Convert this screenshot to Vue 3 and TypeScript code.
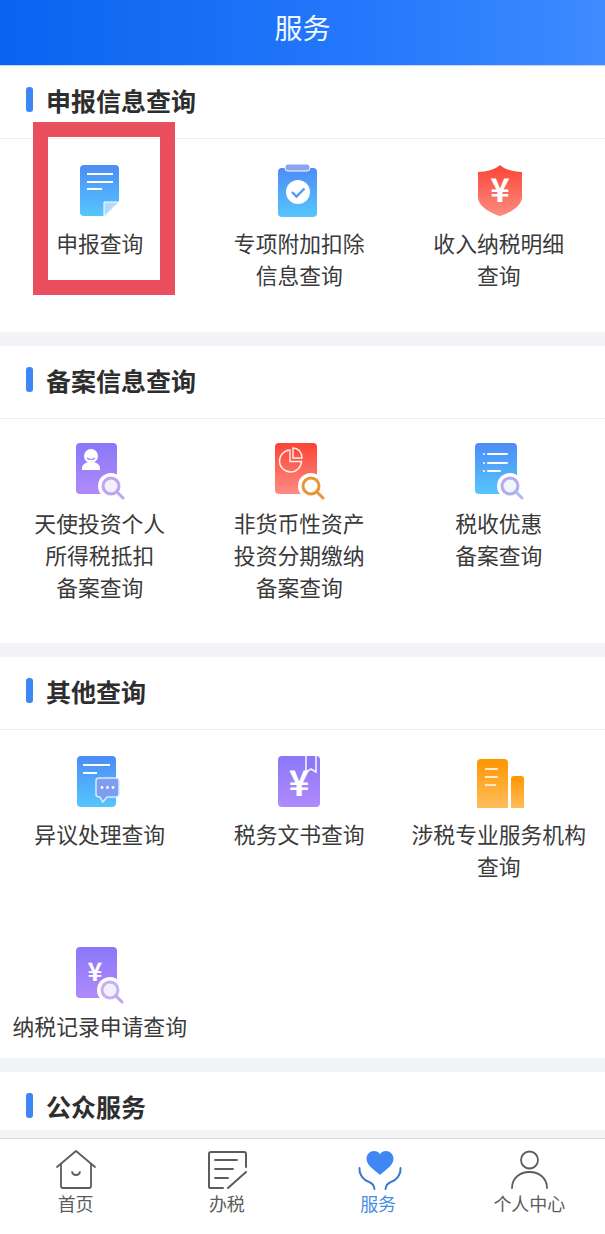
<script setup lang="ts">
interface Item {
  icon: string
  lines: string[]
}
interface Section {
  title: string
  pad: string
  items: Item[]
}

const sections: Section[] = [
  {
    title: '申报信息查询',
    pad: 'pad-a',
    items: [
      { icon: 'doc', lines: ['申报查询'] },
      { icon: 'clip', lines: ['专项附加扣除', '信息查询'] },
      { icon: 'shield', lines: ['收入纳税明细', '查询'] },
    ],
  },
  {
    title: '备案信息查询',
    pad: 'pad-b',
    items: [
      { icon: 'angel', lines: ['天使投资个人', '所得税抵扣', '备案查询'] },
      { icon: 'pie', lines: ['非货币性资产', '投资分期缴纳', '备案查询'] },
      { icon: 'list', lines: ['税收优惠', '备案查询'] },
    ],
  },
  {
    title: '其他查询',
    pad: 'pad-c',
    items: [
      { icon: 'bubble', lines: ['异议处理查询'] },
      { icon: 'book', lines: ['税务文书查询'] },
      { icon: 'org', lines: ['涉税专业服务机构', '查询'] },
      { icon: 'record', lines: ['纳税记录申请查询'] },
    ],
  },
]

const tabs = [
  { key: 'home', label: '首页' },
  { key: 'tax', label: '办税' },
  { key: 'service', label: '服务' },
  { key: 'me', label: '个人中心' },
]
</script>

<template>
  <div class="page">
    <header class="topbar">服务</header>
    <main class="content">
      <section v-for="s in sections" :key="s.title" class="card">
        <h2 class="head"><span class="mark"></span>{{ s.title }}</h2>
        <div class="grid" :class="s.pad">
          <div v-for="it in s.items" :key="it.icon" class="item">
            <svg class="icon" viewBox="0 0 60 56" width="60" height="56">
              <defs>
                <linearGradient id="gBlue" x1="0" y1="0" x2="0" y2="1">
                  <stop offset="0" stop-color="#4c8cf6" />
                  <stop offset="1" stop-color="#55c6fd" />
                </linearGradient>
                <linearGradient id="gRed" x1="0" y1="0" x2="0" y2="1">
                  <stop offset="0" stop-color="#fb4436" />
                  <stop offset="1" stop-color="#fd8c82" />
                </linearGradient>
                <linearGradient id="gPurple" x1="0" y1="0" x2="0" y2="1">
                  <stop offset="0" stop-color="#8a78f8" />
                  <stop offset="1" stop-color="#b08afb" />
                </linearGradient>
                <linearGradient id="gOrange" x1="0" y1="0" x2="0" y2="1">
                  <stop offset="0" stop-color="#ff9600" />
                  <stop offset="1" stop-color="#ffbd5c" />
                </linearGradient>
              </defs>

              <g v-if="it.icon === 'doc'">
                <path d="M14 2h31a4 4 0 0 1 4 4v33L35 53H14a4 4 0 0 1-4-4V6a4 4 0 0 1 4-4z" fill="url(#gBlue)" />
                <path d="M17 11h26M17 19h26M17 26h15" stroke="#fff" stroke-width="2" fill="none" />
                <path d="M34 39h15L34 53z" fill="#b5d8f8" stroke="#fff" stroke-width="1" />
              </g>

              <g v-else-if="it.icon === 'clip'">
                <rect x="8" y="5" width="39" height="49" rx="4" fill="url(#gBlue)" />
                <rect x="15" y="1" width="25" height="7" rx="3" fill="#8ba4ee" stroke="#fff" stroke-width="1" />
                <circle cx="28" cy="29" r="12" fill="#fff" />
                <path d="M22 29l4.500 4.500 8-8" stroke="#4f9bf6" stroke-width="2.400" fill="none" />
              </g>

              <g v-else-if="it.icon === 'shield'">
                <path d="M30 2c4 4 13 7 22 7v25c0 9-12 16-22 19C20 50 8 43 8 34V9c9 0 18-3 22-7z" fill="url(#gRed)" />
                <text x="30" y="39" class="yen" font-size="33" text-anchor="middle">¥</text>
              </g>

              <g v-else-if="it.icon === 'angel'">
                <rect x="6" y="0" width="41" height="51" rx="4" fill="url(#gPurple)" />
                <circle cx="21" cy="13" r="7" fill="#fff" />
                <path d="M17 15c2 2 6 2 8 0" stroke="#9a80f8" stroke-width="1.200" fill="none" />
                <path d="M12 27v-2c0-3 3-5 6-6h6c3 1 6 3 6 6v2z" fill="#fff" />
                <circle cx="41" cy="43" r="13" fill="#fff" />
                <circle cx="41" cy="43" r="8" fill="#f3effe" stroke="#bba6ef" stroke-width="3" />
                <path d="M47.500 49.500l5.500 5.500" stroke="#bba6ef" stroke-width="3" stroke-linecap="round" />
              </g>

              <g v-else-if="it.icon === 'pie'">
                <rect x="5" y="0" width="42" height="51" rx="4" fill="url(#gRed)" />
                <path d="M20 7a11 11 0 1 0 11.500 11.500H20z" stroke="#fff" stroke-width="1.400" fill="none" opacity="0.9" />
                <path d="M23 5c5 0 9 4 9 10h-9z" stroke="#fff" stroke-width="1.400" fill="none" opacity="0.9" />
                <circle cx="41" cy="43" r="13" fill="#fff" />
                <circle cx="41" cy="43" r="8" fill="#fff" stroke="#e8953a" stroke-width="3" />
                <path d="M47.500 49.500l5.500 5.500" stroke="#e8953a" stroke-width="3" stroke-linecap="round" />
              </g>

              <g v-else-if="it.icon === 'list'">
                <rect x="5" y="0" width="42" height="51" rx="4" fill="url(#gBlue)" />
                <path d="M18 11h19M18 20h19M18 28h12" stroke="#fff" stroke-width="2" fill="none" stroke-linecap="round" />
                <circle cx="14" cy="11" r="1" fill="#fff" />
                <circle cx="14" cy="20" r="1" fill="#fff" />
                <circle cx="14" cy="28" r="1" fill="#fff" />
                <circle cx="40" cy="43" r="13" fill="#fff" />
                <circle cx="40" cy="43" r="8" fill="#eef6ff" stroke="#b8a8ee" stroke-width="3" />
                <path d="M46.500 49.500l5.500 5.500" stroke="#a9bdec" stroke-width="3" stroke-linecap="round" />
              </g>

              <g v-else-if="it.icon === 'bubble'">
                <rect x="7" y="2" width="39" height="51" rx="4" fill="url(#gBlue)" />
                <path d="M13 11h27M13 19h14" stroke="#fff" stroke-width="2" fill="none" />
                <path d="M29 24h17a3 3 0 0 1 3 3v13a3 3 0 0 1-3 3h-9l-4 5-3-5h-1a3 3 0 0 1-3-3V27a3 3 0 0 1 3-3z" fill="#7d9df1" stroke="#d6ecff" stroke-width="1.500" />
                <circle cx="32" cy="33.500" r="1.400" fill="#fff" />
                <circle cx="37.500" cy="33.500" r="1.400" fill="#fff" />
                <circle cx="43" cy="33.500" r="1.400" fill="#fff" />
              </g>

              <g v-else-if="it.icon === 'book'">
                <rect x="8" y="2" width="42" height="51" rx="4" fill="url(#gPurple)" />
                <path d="M36 2v16l5-3 5 3V2" fill="#8a78f8" stroke="#f3f0ff" stroke-width="1.600" />
                <text x="29" y="42" class="yen" font-size="35" text-anchor="middle">¥</text>
              </g>

              <g v-else-if="it.icon === 'org'">
                <path d="M11 5h23a4 4 0 0 1 4 4v45H7V9a4 4 0 0 1 4-4z" fill="url(#gOrange)" />
                <path d="M44 22h7a3 3 0 0 1 3 3v29H41V25a3 3 0 0 1 3-3z" fill="url(#gOrange)" />
                <path d="M15 15h13M15 23h13M15 31h11" stroke="#ffe9c8" stroke-width="2" fill="none" />
              </g>

              <g v-else-if="it.icon === 'record'">
                <rect x="6" y="1" width="41" height="51" rx="4" fill="url(#gPurple)" />
                <text x="25" y="35" class="yen" font-size="25" text-anchor="middle">¥</text>
                <circle cx="40" cy="44" r="13" fill="#fff" />
                <circle cx="40" cy="44" r="8" fill="#f3effe" stroke="#c3b1f1" stroke-width="3" />
                <path d="M46.500 50.500l5.500 5.500" stroke="#bba6ef" stroke-width="3" stroke-linecap="round" />
              </g>
            </svg>
            <div class="label">
              <div v-for="l in it.lines" :key="l">{{ l }}</div>
            </div>
          </div>
        </div>
      </section>
      <section class="card peek">
        <h2 class="head"><span class="mark"></span>公众服务</h2>
      </section>
    </main>

    <nav class="tabbar">
      <div v-for="t in tabs" :key="t.key" class="tab" :class="{ active: t.key === 'service' }">
        <svg class="tab-icon" viewBox="0 0 44 40" width="44" height="40" fill="none">
          <g v-if="t.key === 'home'" stroke="#5c5c5c" stroke-width="1.800" stroke-linecap="round" stroke-linejoin="round">
            <path d="M3 17L22 1l19 16" />
            <path d="M7 14v22a2 2 0 0 0 2 2h26a2 2 0 0 0 2-2V14" />
            <path d="M18 22c1 4 7 4 8 0" />
          </g>
          <g v-else-if="t.key === 'tax'" stroke="#5c5c5c" stroke-width="2" stroke-linecap="round" stroke-linejoin="round">
            <path d="M41 17V4a2 2 0 0 0-2-2H6a2 2 0 0 0-2 2v33a1 1 0 0 0 1 1h13" />
            <path d="M10 10h22M10 19h18M10 28h13" stroke-width="1.800" />
            <path d="M41 22L23 38" />
          </g>
          <g v-else-if="t.key === 'service'" transform="translate(2 0)">
            <path d="M22 25C15 19 8.500 15 8.500 8.500 8.500 4.500 12 1 16 1c2.600 0 4.800 1.200 6 3.200C23.200 2.200 25.400 1 28 1c4 0 7.500 3.500 7.500 7.500C35.500 15 29 19 22 25z" fill="#3f87f5" />
            <path d="M1.500 18c-.5 7 4 12 9.500 14 3 1 5 3 5.500 7M42.500 18c.5 7-4 12-9.500 14-3 1-5 3-5.500 7" stroke="#3f77c8" stroke-width="1.900" stroke-linecap="round" />
          </g>
          <g v-else stroke="#5c5c5c" stroke-width="1.800" stroke-linecap="round">
            <circle cx="22.500" cy="10" r="8.500" />
            <path d="M5 38c0-10 8-16 17.500-16S40 28 40 38" />
          </g>
        </svg>
        <span class="tab-label">{{ t.label }}</span>
      </div>
    </nav>

    <div class="frame"></div>
  </div>
</template>

<style>
html,
body {
  margin: 0;
  background: #fff;
}
</style>

<style scoped>
.page {
  position: relative;
  width: 605px;
  height: 1234px;
  display: flex;
  flex-direction: column;
  overflow: hidden;
  font-family: "Noto Sans CJK SC", "Noto Sans", sans-serif;
  background: #f3f4f8;
}
.topbar {
  flex: none;
  height: 65px;
  line-height: 55px;
  text-align: center;
  font-size: 28px;
  color: #f2f7ff;
  background: linear-gradient(90deg, #0a64f0 0%, #2478fb 60%, #3f8bff 100%);
  border-bottom: 1px solid #bcdcff;
}
.content {
  flex: 1;
  min-height: 0;
  display: flex;
  flex-direction: column;
  gap: 14px;
  overflow: hidden;
}
.card {
  flex: none;
  background: #fff;
}
.head {
  display: flex;
  align-items: center;
  gap: 13px;
  height: 67px;
  margin: 0;
  padding-left: 26px;
  padding-bottom: 5px;
  font-size: 25px;
  font-weight: 700;
  color: #2e2e2e;
  border-bottom: 1px solid #ececec;
  box-sizing: content-box;
}
.mark {
  width: 7px;
  height: 25px;
  border-radius: 3px;
  background: #3d86f5;
}
.peek {
  height: 58px;
  overflow: hidden;
}
.grid {
  display: grid;
  grid-template-columns: repeat(3, 199.5px);
  row-gap: 63px;
  padding-top: 24px;
}
.pad-a {
  padding-bottom: 40px;
}
.pad-b {
  padding-bottom: 39px;
}
.pad-c {
  padding-bottom: 15px;
}
.item {
  display: flex;
  flex-direction: column;
  align-items: center;
}
.icon {
  display: block;
  overflow: visible;
  margin-bottom: 8px;
}
.item:nth-child(3n + 2) .icon {
  margin-left: 1.5px;
}
.item:nth-child(3n) .icon {
  margin-left: 2.5px;
}
.yen {
  fill: #fff;
  font-family: "Noto Sans CJK SC", sans-serif;
  font-weight: 700;
}
.label {
  font-size: 21.8px;
  line-height: 32px;
  margin-bottom: 1px;
  color: #3a3a3a;
  text-align: center;
  white-space: nowrap;
}
.tabbar {
  flex: none;
  height: 95px;
  display: flex;
  background: #fff;
  border-top: 1px solid #dcdcdc;
}
.tab {
  flex: 1;
  display: flex;
  flex-direction: column;
  align-items: center;
  padding-top: 11px;
}
.tab-icon {
  display: block;
  overflow: visible;
}
.tab-label {
  margin-top: 1px;
  font-size: 18px;
  line-height: 24px;
  color: #5c5c5c;
}
.active .tab-label {
  color: #4a8ce4;
}
.frame {
  position: absolute;
  left: 33px;
  top: 122px;
  width: 142px;
  height: 173px;
  box-sizing: border-box;
  border: 15px solid #ea4f5e;
}
</style>
